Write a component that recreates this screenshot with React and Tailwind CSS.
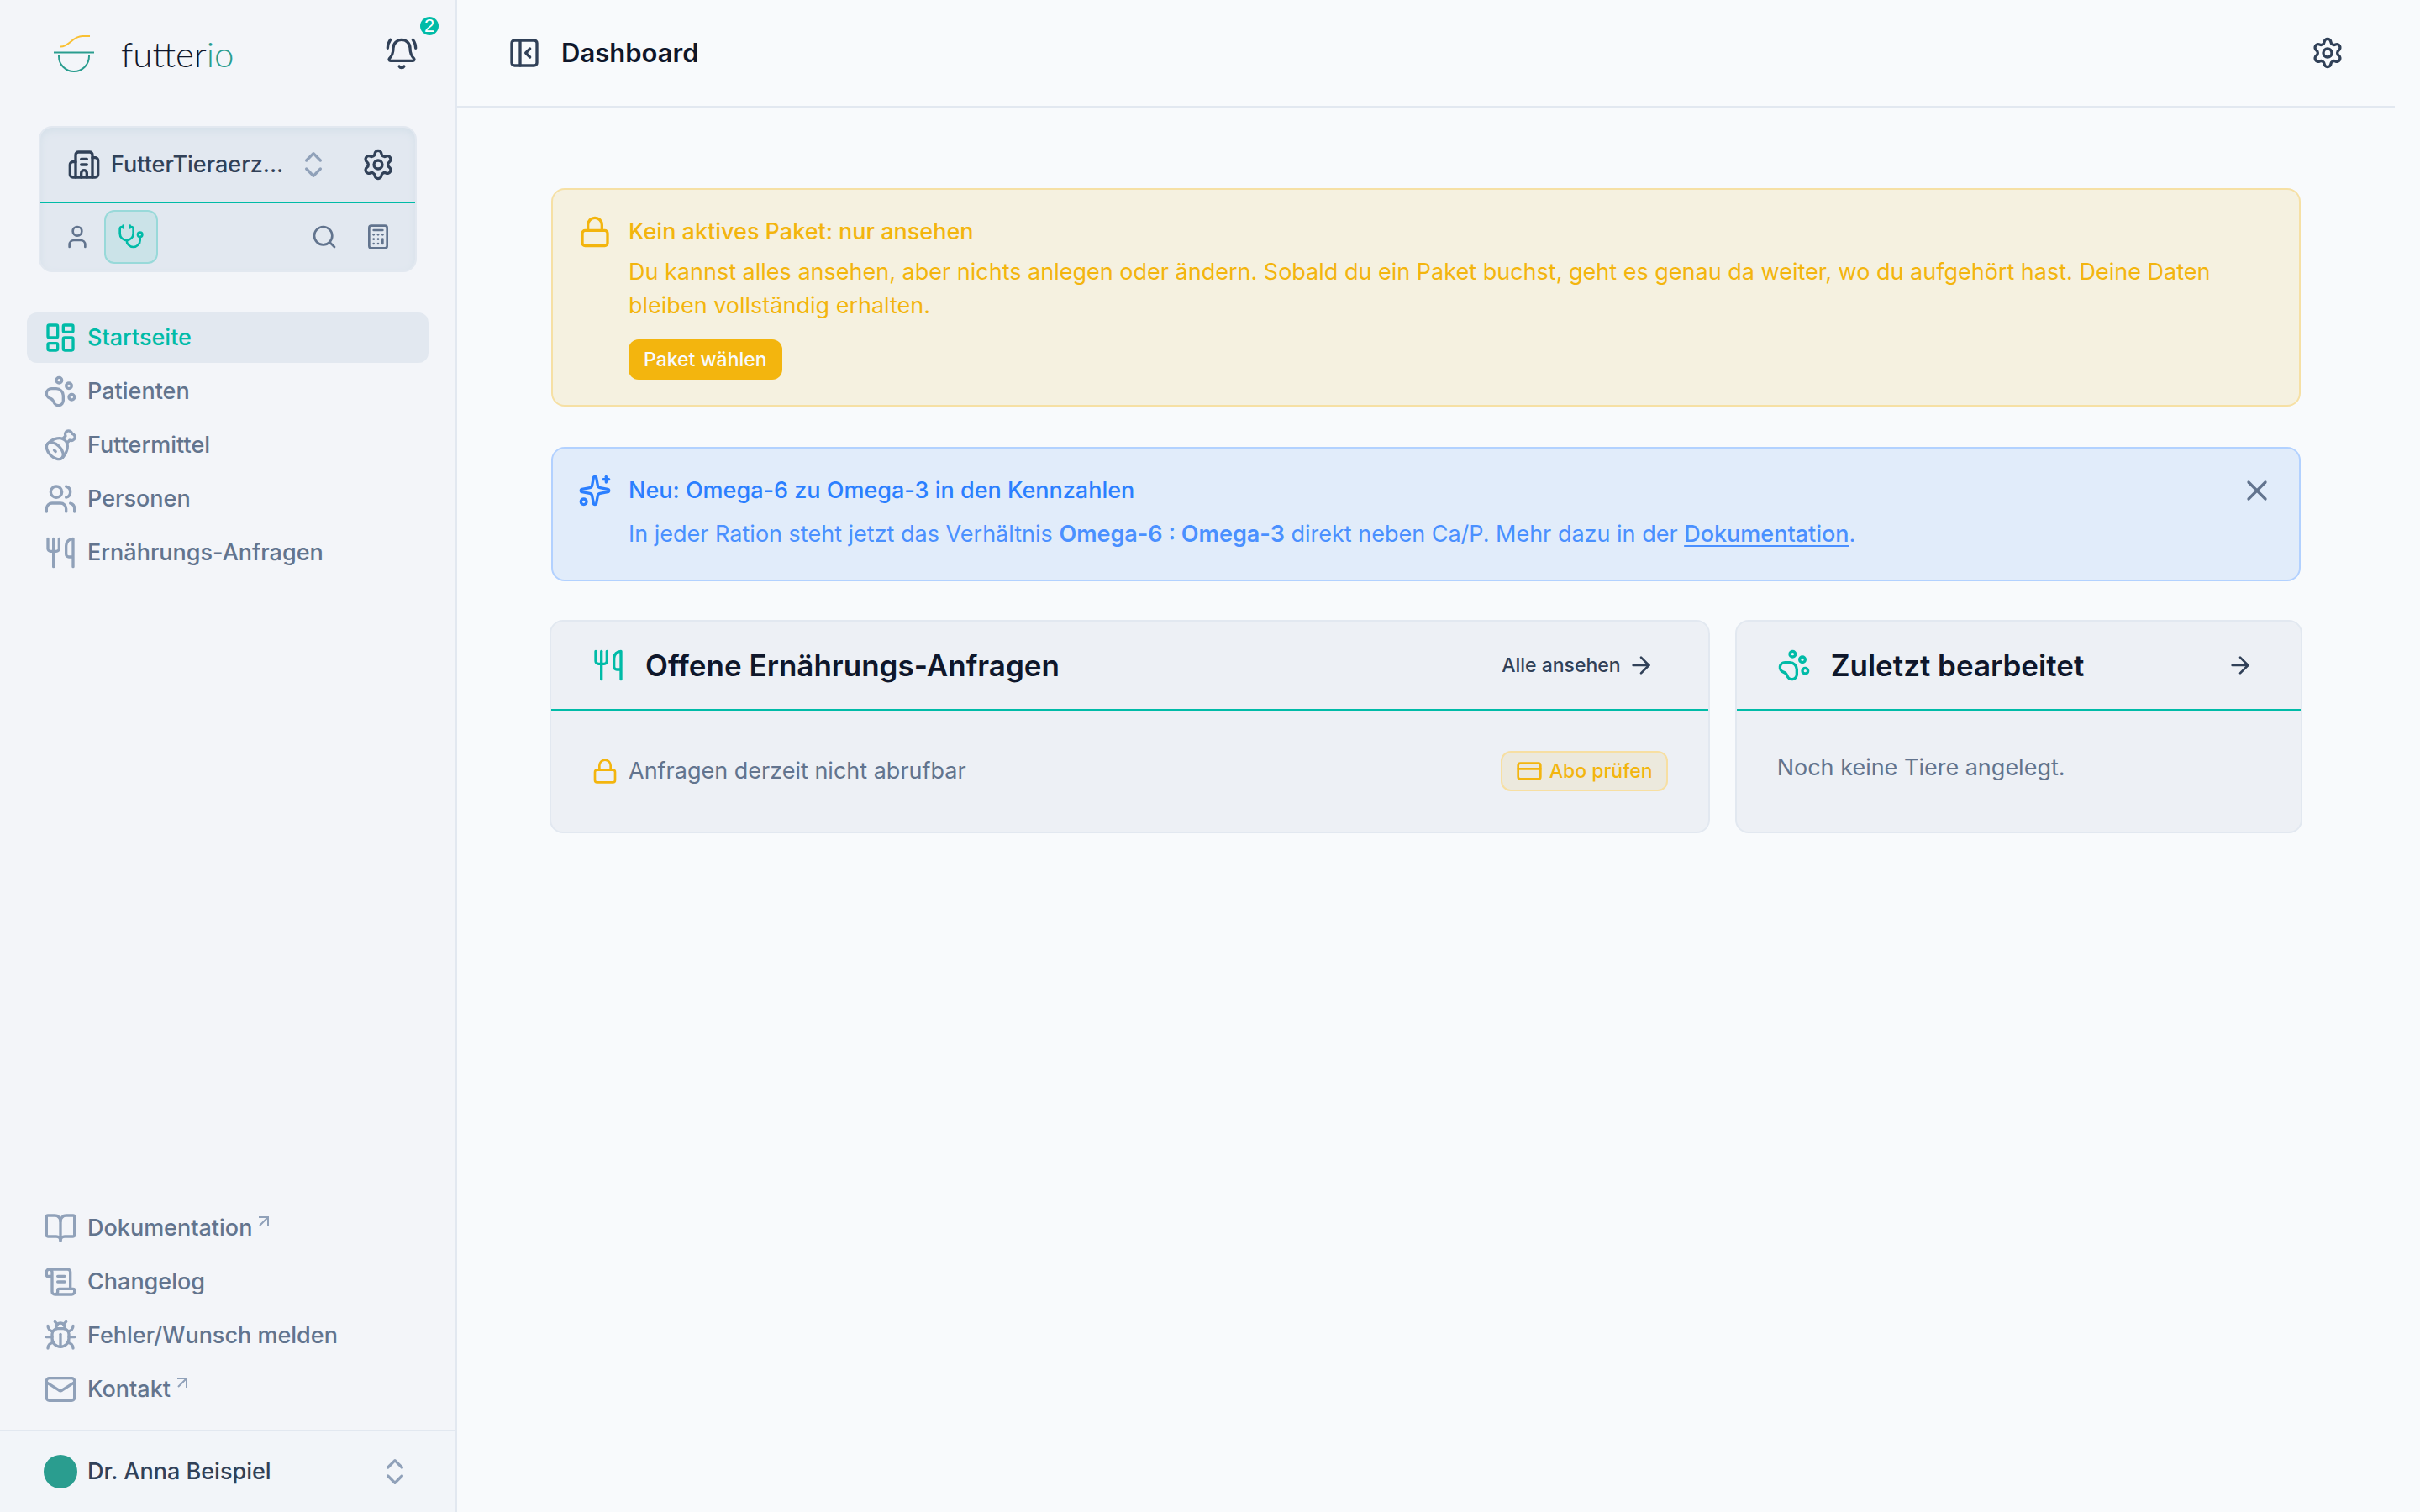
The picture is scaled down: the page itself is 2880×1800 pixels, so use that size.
import React from 'react';
import {
  ArrowRight,
  BellRing,
  BookOpen,
  Bug,
  Building2,
  Calculator,
  ChevronsUpDown,
  CreditCard,
  Ham,
  LayoutDashboard,
  Lock,
  Mail,
  PanelLeftClose,
  PawPrint,
  ScrollText,
  Search,
  Settings,
  Sparkles,
  Stethoscope,
  User,
  Users,
  Utensils,
  X,
} from 'lucide-react';

const mainNav = [
  { label: 'Startseite', icon: LayoutDashboard, active: true },
  { label: 'Patienten', icon: PawPrint },
  { label: 'Futtermittel', icon: Ham },
  { label: 'Personen', icon: Users },
  { label: 'Ernährungs-Anfragen', icon: Utensils },
];

const helpNav = [
  { label: 'Dokumentation', icon: BookOpen, external: true },
  { label: 'Changelog', icon: ScrollText },
  { label: 'Fehler/Wunsch melden', icon: Bug },
  { label: 'Kontakt', icon: Mail, external: true },
];

function ExternalArrow() {
  return (
    <svg viewBox="0 0 12 12" fill="none" stroke="currentColor" strokeWidth="2" className="mt-4 ml-2 size-3 shrink-0 self-start text-slate-400">
      <path d="M0 1h11v11M11 1L1 11" />
    </svg>
  );
}

function NavList({ items }) {
  return (
    <ul className="flex flex-col gap-1 px-8">
      {items.map(({ label, icon: Icon, active, external }) => (
        <li key={label}>
          <a
            href="#"
            className={
              active
                ? 'flex h-15 items-center rounded-xl bg-slate-200 px-5 font-medium text-[#00bba7]'
                : 'flex h-15 items-center rounded-xl px-5 font-medium text-slate-500'
            }
          >
            <Icon className={active ? 'mr-3 size-10 shrink-0' : 'mr-3 size-10 shrink-0 text-slate-400'} />
            <span>{label}</span>
            {external && <ExternalArrow />}
          </a>
        </li>
      ))}
    </ul>
  );
}

function Logo() {
  return (
    <a href="#" className="flex items-center gap-8">
      <svg viewBox="0 0 48 44" fill="none" strokeWidth="2" className="h-11 w-12">
        <path d="M8 13.500C19 13.500 22 1 34 1h9" stroke="#f9c033" />
        <path d="M0 20.500h48" stroke="#2a9d8f" />
        <path d="M6 24v1a18 18 0 0 0 36 0v-1" stroke="#2a9d8f" />
      </svg>
      <span className="font-[Lato,sans-serif] text-[42px] leading-11 font-light text-slate-900">
        futter<span className="text-[#2a9d8f]">io</span>
      </span>
    </a>
  );
}

function Switcher() {
  return (
    <div className="mx-[46px] rounded-2xl border-2 border-slate-200 bg-slate-200 shadow-[inset_0_4px_8px_#d5e0e9]">
      <div className="flex h-[90px] items-center justify-between border-b-2 border-[#00bba7] pr-6 pl-8">
        <button type="button" className="flex items-center font-medium text-slate-700">
          <Building2 className="mr-3 size-10" />
          <span>FutterTieraerz...</span>
          <ChevronsUpDown className="ml-4 size-10 text-slate-400" />
        </button>
        <button type="button" aria-label="Einstellungen" className="text-slate-700">
          <Settings className="size-10" />
        </button>
      </div>
      <div className="flex h-20 items-center pr-3 pl-3 text-slate-500">
        <button type="button" aria-label="Person" className="flex size-16 items-center justify-center">
          <User className="size-8" />
        </button>
        <button type="button" aria-label="Praxis" className="flex size-16 items-center justify-center rounded-xl border-2 border-[#00bba7]/25 bg-[#00bba7]/10 text-[#00bba7]">
          <Stethoscope className="size-8" />
        </button>
        <button type="button" aria-label="Suche" className="ml-auto flex size-16 items-center justify-center">
          <Search className="size-8" />
        </button>
        <button type="button" aria-label="Rechner" className="flex size-16 items-center justify-center">
          <Calculator className="size-8" />
        </button>
      </div>
    </div>
  );
}

function Sidebar() {
  return (
    <aside className="flex w-[544px] shrink-0 flex-col border-r-2 border-slate-200 bg-[#f3f5f9]">
      <div className="flex h-32 items-center justify-between pr-11 pl-16">
        <Logo />
        <button type="button" aria-label="Benachrichtigungen" className="relative text-slate-700">
          <BellRing className="size-10" />
          <span className="absolute -top-6 -right-6 flex size-[22px] items-center justify-center rounded-full bg-[#00bba7] font-['Liberation_Sans',sans-serif] text-[22px] leading-none text-white">
            2
          </span>
        </button>
      </div>
      <div className="pt-[22px]">
        <Switcher />
      </div>
      <nav aria-label="Hauptnavigation" className="mt-12 flex grow flex-col justify-between">
        <NavList items={mainNav} />
        <NavList items={helpNav} />
      </nav>
      <button type="button" className="mt-[18px] flex h-[98px] items-center border-t-2 border-slate-200 bg-[#f2f5f9] px-[52px] font-medium text-slate-700">
        <span className="mr-3 size-10 rounded-full bg-[#2a9d8f]" />
        <span>Dr. Anna Beispiel</span>
        <ChevronsUpDown className="ml-auto size-10 text-slate-400" />
      </button>
    </aside>
  );
}

function Card({ icon: Icon, title, action, children }) {
  return (
    <section className="rounded-2xl border-2 border-slate-200 bg-[#edf0f5]">
      <header className="flex h-[106px] items-center justify-between border-b-2 border-[#00bba7] px-12">
        <h2 className="flex items-center gap-6 text-[35px] font-semibold text-slate-900">
          <Icon className="size-10 text-[#00bba7]" />
          {title}
        </h2>
        {action}
      </header>
      {children}
    </section>
  );
}

export default function App() {
  return (
    <div className="flex min-h-screen bg-slate-50 font-[Inter,sans-serif] text-[27px] leading-10">
      <Sidebar />
      <main className="min-w-0 grow pr-[30px]">
        <header className="flex h-32 items-center border-b-2 border-slate-200 px-15 text-slate-700">
          <button type="button" aria-label="Seitenleiste schließen">
            <PanelLeftClose className="size-10" />
          </button>
          <h1 className="ml-6 text-[31px] font-semibold text-slate-900">Dashboard</h1>
          <button type="button" aria-label="Dashboard anpassen" className="ml-auto">
            <Settings className="size-10" />
          </button>
        </header>

        <div className="px-[110px] pt-24">
          <div className="flex flex-col gap-12 px-0.5">
            <section className="flex gap-5 rounded-2xl border-2 border-[#f6e0a4] bg-[#f5f1e0] p-[30px] text-[#f3b50e]">
              <Lock className="size-10 shrink-0" />
              <div className="flex flex-col items-start">
                <h2 className="font-medium">Kein aktives Paket: nur ansehen</h2>
                <p className="mt-2 pr-14">
                  Du kannst alles ansehen, aber nichts anlegen oder ändern. Sobald du ein Paket buchst, geht es genau da weiter, wo du aufgehört hast. Deine Daten bleiben vollständig erhalten.
                </p>
                <button type="button" className="mt-5 flex h-12 items-center rounded-xl bg-[#f3b50e] px-[18px] text-[23px] font-medium text-slate-50">
                  Paket wählen
                </button>
              </div>
            </section>

            <section className="flex gap-5 rounded-2xl border-2 border-[#b2d1ff] bg-[#e1ecfa] p-[30px] text-[#2b7fff]">
              <Sparkles className="size-10 shrink-0" />
              <div className="grow">
                <h2 className="font-medium">Neu: Omega-6 zu Omega-3 in den Kennzahlen</h2>
                <p className="mt-3 mb-1 text-[#4a90ff]">
                  In jeder Ration steht jetzt das Verhältnis <strong className="font-semibold">Omega-6 : Omega-3</strong> direkt neben Ca/P. Mehr dazu in der{' '}
                  <a href="#" className="font-medium underline decoration-2 underline-offset-4">Dokumentation</a>.
                </p>
              </div>
              <button type="button" aria-label="Hinweis schließen" className="self-start text-slate-500">
                <X className="size-10" />
              </button>
            </section>
          </div>

          <div className="mt-[46px] grid grid-cols-3 gap-[30px]">
            <div className="col-span-2 grid">
              <Card
                icon={Utensils}
                title="Offene Ernährungs-Anfragen"
                action={
                  <a href="#" className="mr-4 flex items-center gap-2 text-[23px] font-medium text-slate-700">
                    Alle ansehen
                    <ArrowRight className="size-8" />
                  </a>
                }
              >
                <div className="flex h-36 items-center gap-3 px-12">
                  <Lock className="size-8 text-[#f3b50e]" />
                  <p className="text-slate-500">Anfragen derzeit nicht abrufbar</p>
                  <button type="button" className="ml-auto flex h-12 items-center gap-2 rounded-xl border-2 border-[#f7dfa2] bg-[#ece9dd] px-4 text-[23px] font-medium text-[#f3b50e]">
                    <CreditCard className="size-8" />
                    Abo prüfen
                  </button>
                </div>
              </Card>
            </div>
            <Card
              icon={PawPrint}
              title="Zuletzt bearbeitet"
              action={
                <a href="#" aria-label="Alle Tiere ansehen" className="mr-2 text-slate-700">
                  <ArrowRight className="size-8" />
                </a>
              }
            >
              <p className="px-12 py-12 text-slate-500">Noch keine Tiere angelegt.</p>
            </Card>
          </div>
        </div>
      </main>
    </div>
  );
}
